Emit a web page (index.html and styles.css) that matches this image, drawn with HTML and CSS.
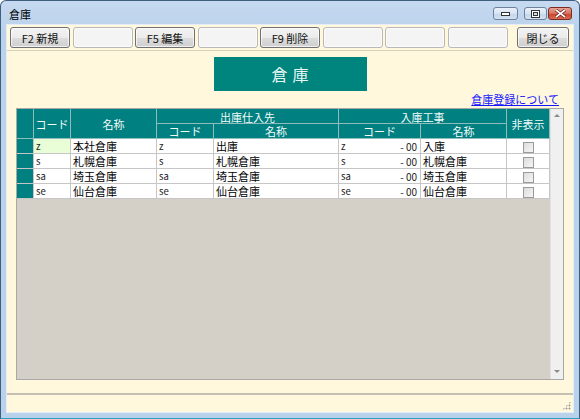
FILE: index.html
```html
<!DOCTYPE html>
<html lang="ja">
<head>
<meta charset="utf-8">
<title>倉庫</title>
<link rel="stylesheet" href="styles.css">
</head>
<body>
<div class="window">
  <div class="titlebar">
    <span class="title">倉庫</span>
    <div class="wbtns">
      <span class="wb wb-min"><svg width="9" height="4" viewBox="0 0 9 4"><rect x="0.5" y="0.5" width="8" height="3" fill="#fff" stroke="#333"/></svg></span>
      <span class="wb wb-max"><svg width="9" height="8" viewBox="0 0 9 8"><rect x="0.5" y="0.5" width="8" height="7" fill="#fff" stroke="#333"/><rect x="2.5" y="2.5" width="4" height="3" fill="#cfdff0" stroke="#333"/></svg></span>
      <span class="wb wb-close"><svg width="11" height="9" viewBox="0 0 11 9"><path d="M1 1 L10 8 M10 1 L1 8" stroke="#5a1010" stroke-width="3"/><path d="M1 1 L10 8 M10 1 L1 8" stroke="#fff" stroke-width="1.6"/></svg></span>
    </div>
  </div>
  <div class="client">
    <div class="toolbar">
      <div class="fkeys">
        <button class="btn">F2 新規</button>
        <button class="btn btn-blank"></button>
        <button class="btn">F5 編集</button>
        <button class="btn btn-blank"></button>
        <button class="btn">F9 削除</button>
        <button class="btn btn-blank"></button>
        <button class="btn btn-blank"></button>
        <button class="btn btn-blank"></button>
      </div>
      <button class="btn btn-close">閉じる</button>
    </div>
    <div class="main">
      <div class="heading">倉庫</div>
      <div class="linkrow"><a class="help" href="#">倉庫登録について</a></div>
      <div class="grid">
        <div class="tablewrap">
          <table class="data">
            <colgroup>
              <col class="c-rh"><col class="c-code"><col class="c-name"><col class="c-ocode"><col class="c-oname"><col class="c-icode"><col class="c-iname"><col class="c-hide">
            </colgroup>
            <thead>
              <tr class="h1">
                <th rowspan="2"></th>
                <th rowspan="2">コード</th>
                <th rowspan="2">名称</th>
                <th colspan="2">出庫仕入先</th>
                <th colspan="2">入庫工事</th>
                <th rowspan="2">非表示</th>
              </tr>
              <tr class="h2">
                <th>コード</th>
                <th>名称</th>
                <th>コード</th>
                <th>名称</th>
              </tr>
            </thead>
            <tbody>
              <tr>
                <td class="rh"></td>
                <td class="code current">z</td>
                <td>本社倉庫</td>
                <td class="code">z</td>
                <td>出庫</td>
                <td class="code"><span class="icode"><span>z</span><span>- 00</span></span></td>
                <td>入庫</td>
                <td class="chk"><span class="box"></span></td>
              </tr>
              <tr>
                <td class="rh"></td>
                <td class="code">s</td>
                <td>札幌倉庫</td>
                <td class="code">s</td>
                <td>札幌倉庫</td>
                <td class="code"><span class="icode"><span>s</span><span>- 00</span></span></td>
                <td>札幌倉庫</td>
                <td class="chk"><span class="box"></span></td>
              </tr>
              <tr>
                <td class="rh"></td>
                <td class="code">sa</td>
                <td>埼玉倉庫</td>
                <td class="code">sa</td>
                <td>埼玉倉庫</td>
                <td class="code"><span class="icode"><span>sa</span><span>- 00</span></span></td>
                <td>埼玉倉庫</td>
                <td class="chk"><span class="box"></span></td>
              </tr>
              <tr>
                <td class="rh"></td>
                <td class="code">se</td>
                <td>仙台倉庫</td>
                <td class="code">se</td>
                <td>仙台倉庫</td>
                <td class="code"><span class="icode"><span>se</span><span>- 00</span></span></td>
                <td>仙台倉庫</td>
                <td class="chk"><span class="box"></span></td>
              </tr>
            </tbody>
          </table>
        </div>
        <div class="vscroll">
          <span class="arr arr-up"></span>
          <span class="arr arr-down"></span>
        </div>
      </div>
    </div>
    <div class="status"><span class="grip"></span></div>
  </div>
</div>
</body>
</html>
```

FILE: styles.css
```css
* { box-sizing: border-box; }
html, body { margin: 0; padding: 0; }
body {
  width: 580px;
  height: 419px;
  font-family: "Noto Sans CJK JP", "Noto Sans", sans-serif;
  font-size: 11px;
  color: #000;
  overflow: hidden;
  background: #fff;
}
.window {
  width: 580px;
  height: 419px;
  border: 1px solid #3f5f80;
  border-bottom-color: #2a9fc0;
  border-radius: 6px 6px 0 0;
  background: linear-gradient(#c6d9f0 0, #bad2eb 30px, #b9d1ea 100%);
  padding: 0 5px 5px 5px;
  display: flex;
  flex-direction: column;
}
.titlebar {
  height: 23px;
  display: flex;
  align-items: center;
  justify-content: space-between;
  padding-left: 3px;
}
.title {
  font-size: 11px;
  line-height: 12px;
  margin-top: 2px;
}
.wbtns {
  display: flex;
  align-items: center;
  margin-top: 2px;
  margin-right: 2px;
}
.wb {
  height: 13px;
  display: flex;
  align-items: center;
  justify-content: center;
  border: 1px solid #6d819b;
  border-radius: 3px;
  background: linear-gradient(#eaf1fa 0, #d6e3f2 50%, #c3d5ea 51%, #d2e1f2 100%);
}
.wb-min { width: 25px; margin-right: 6px; }
.wb-max { width: 23px; }
.wb-close {
  width: 24px;
  margin-left: 1px;
  border-color: #7a2c22;
  background: linear-gradient(#e7a496 0, #d86e5c 50%, #c8402a 51%, #d86a52 100%);
}
.client {
  flex: 1;
  background: #fff8dc;
  border: 1px solid #e4edf8;
  display: flex;
  flex-direction: column;
}
.toolbar {
  height: 26px;
  border-bottom: 1px solid #d6d2be;
  display: flex;
  justify-content: space-between;
  align-items: flex-start;
  padding: 2px 4px 0 3px;
}
.fkeys {
  display: flex;
  gap: 2.5px;
}
.btn {
  width: 60px;
  height: 21px;
  padding: 0;
  font-family: "Noto Sans CJK JP", "Noto Sans", sans-serif;
  font-size: 11px;
  line-height: 12px;
  color: #111;
  border: 1px solid #707070;
  border-radius: 3px;
  background: linear-gradient(#f3f3f3 0, #ebebeb 50%, #dddddd 51%, #cfcfcf 100%);
  box-shadow: inset 0 0 0 1px rgba(255,255,255,0.7);
}
.btn-blank {
  border-color: #b8b8b8;
  background: #f4f4f4;
  box-shadow: inset 0 0 0 1px #fbfbfb;
}
.btn-close { width: 52px; }
.main {
  flex: 1;
  display: flex;
  flex-direction: column;
  padding: 6px 9px 13px 9px;
}
.heading {
  align-self: center;
  width: 153px;
  height: 34px;
  background: #00857e;
  color: #eaf6f4;
  font-size: 16px;
  line-height: 34px;
  text-align: center;
  letter-spacing: 5px;
  padding-left: 5px;
}
.linkrow {
  height: 17px;
  display: flex;
  justify-content: flex-end;
  align-items: flex-end;
  padding: 0 5px 3px 0;
}
.help {
  color: #1515ff;
  font-size: 11px;
  line-height: 11px;
  text-decoration: underline;
}
.grid {
  flex: 1;
  display: flex;
  border: 1px solid #a8a8a8;
  background: #d4d0c8;
}
.tablewrap { flex: 1; }
.data {
  border-collapse: collapse;
  table-layout: fixed;
  width: 532px;
}
.c-rh { width: 16px; }
.c-code { width: 37px; }
.c-name { width: 86px; }
.c-ocode { width: 57px; }
.c-oname { width: 125px; }
.c-icode { width: 82px; }
.c-iname { width: 86px; }
.c-hide { width: 43px; }
.data th {
  background: #008080;
  color: #f2fbfa;
  font-weight: normal;
  font-size: 11px;
  line-height: 12px;
  padding: 0;
  border: 1px solid #8fbdbb;
  text-align: center;
}
.data thead tr.h1 th:first-child { border-left-color: #008080; }
.data tr.h1 th { border-top-color: #008080; }
.h1 th { height: 14px; }
.h2 th { height: 15px; }
.data td {
  background: #fff;
  height: 15px;
  padding: 0 2px;
  border: 1px solid #c6c6c6;
  font-size: 11px;
  line-height: 13px;
  white-space: nowrap;
  overflow: hidden;
}
.data td.rh {
  background: #008080;
  border-color: #c6c6c6;
  border-left-color: #008080;
}
.data td.code { font-size: 9.5px; color: #222; }
.data td.current { background: #e9fdd7; }
.icode {
  display: flex;
  justify-content: space-between;
}
.icode span:last-child { font-size: 10px; padding-right: 1px; }
.data td.chk { text-align: center; }
.box {
  display: inline-block;
  width: 11px;
  height: 11px;
  border: 1px solid #9a9a9a;
  background: linear-gradient(135deg, #dcdcdc, #f6f6f6);
  vertical-align: middle;
}
.vscroll {
  width: 14px;
  background: #f0f0f0;
  border-left: 1px solid #e2e2e2;
  display: flex;
  flex-direction: column;
  justify-content: space-between;
  align-items: center;
  padding: 5px 0 6px;
}
.arr {
  width: 0;
  height: 0;
  border-left: 3px solid transparent;
  border-right: 3px solid transparent;
}
.arr-up { border-bottom: 3px solid #8a8a8a; }
.arr-down { border-top: 3px solid #8a8a8a; }
.status {
  height: 19px;
  border-top: 2px solid #c4c1b4;
  display: flex;
  justify-content: flex-end;
  align-items: flex-end;
}
.grip {
  width: 9px;
  height: 9px;
  margin: 0 2px 2px 0;
  background:
    radial-gradient(circle, #9a9a9a 0.9px, transparent 1.1px) 0 0 / 3px 3px;
  clip-path: polygon(100% 0, 100% 100%, 0 100%);
}
```
